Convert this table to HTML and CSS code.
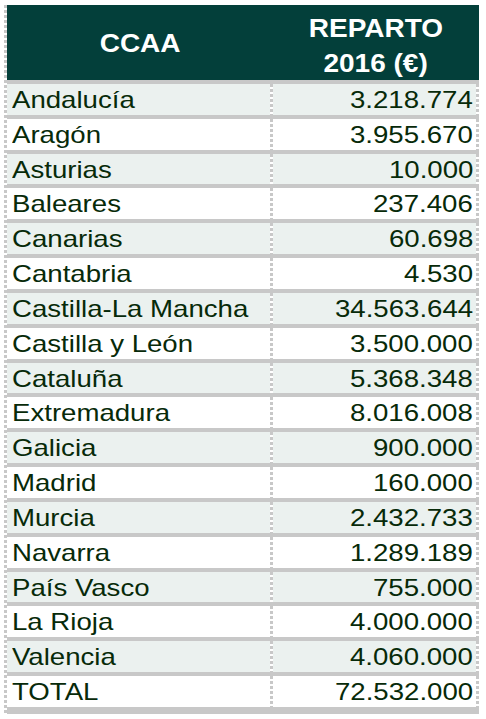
FILE: index.html
```html
<!DOCTYPE html>
<html lang="es">
<head>
<meta charset="utf-8">
<title>Reparto 2016</title>
<link rel="stylesheet" href="styles.css">
</head>
<body>
<div class="sheet">
  <div class="head">
    <div class="hcell hcell-single"><span class="sx">CCAA</span></div>
    <div class="hcell"><span class="sx">REPARTO</span><br><span class="sx">2016 (€)</span></div>
  </div>
  <div class="row alt"><div class="name"><span class="sx">Andalucía</span></div><div class="sep"></div><div class="val"><span class="sx">3.218.774</span></div><div class="edge"></div></div>
  <div class="row"><div class="name"><span class="sx">Aragón</span></div><div class="sep"></div><div class="val"><span class="sx">3.955.670</span></div><div class="edge"></div></div>
  <div class="row alt"><div class="name"><span class="sx">Asturias</span></div><div class="sep"></div><div class="val"><span class="sx">10.000</span></div><div class="edge"></div></div>
  <div class="row"><div class="name"><span class="sx">Baleares</span></div><div class="sep"></div><div class="val"><span class="sx">237.406</span></div><div class="edge"></div></div>
  <div class="row alt"><div class="name"><span class="sx">Canarias</span></div><div class="sep"></div><div class="val"><span class="sx">60.698</span></div><div class="edge"></div></div>
  <div class="row"><div class="name"><span class="sx">Cantabria</span></div><div class="sep"></div><div class="val"><span class="sx">4.530</span></div><div class="edge"></div></div>
  <div class="row alt"><div class="name"><span class="sx">Castilla-La Mancha</span></div><div class="sep"></div><div class="val"><span class="sx">34.563.644</span></div><div class="edge"></div></div>
  <div class="row"><div class="name"><span class="sx">Castilla y León</span></div><div class="sep"></div><div class="val"><span class="sx">3.500.000</span></div><div class="edge"></div></div>
  <div class="row alt"><div class="name"><span class="sx">Cataluña</span></div><div class="sep"></div><div class="val"><span class="sx">5.368.348</span></div><div class="edge"></div></div>
  <div class="row"><div class="name"><span class="sx">Extremadura</span></div><div class="sep"></div><div class="val"><span class="sx">8.016.008</span></div><div class="edge"></div></div>
  <div class="row alt"><div class="name"><span class="sx">Galicia</span></div><div class="sep"></div><div class="val"><span class="sx">900.000</span></div><div class="edge"></div></div>
  <div class="row"><div class="name"><span class="sx">Madrid</span></div><div class="sep"></div><div class="val"><span class="sx">160.000</span></div><div class="edge"></div></div>
  <div class="row alt"><div class="name"><span class="sx">Murcia</span></div><div class="sep"></div><div class="val"><span class="sx">2.432.733</span></div><div class="edge"></div></div>
  <div class="row"><div class="name"><span class="sx">Navarra</span></div><div class="sep"></div><div class="val"><span class="sx">1.289.189</span></div><div class="edge"></div></div>
  <div class="row alt"><div class="name"><span class="sx">País Vasco</span></div><div class="sep"></div><div class="val"><span class="sx">755.000</span></div><div class="edge"></div></div>
  <div class="row"><div class="name"><span class="sx">La Rioja</span></div><div class="sep"></div><div class="val"><span class="sx">4.000.000</span></div><div class="edge"></div></div>
  <div class="row alt"><div class="name"><span class="sx">Valencia</span></div><div class="sep"></div><div class="val"><span class="sx">4.060.000</span></div><div class="edge"></div></div>
  <div class="row last"><div class="name"><span class="sx">TOTAL</span></div><div class="sep"></div><div class="val"><span class="sx">72.532.000</span></div><div class="edge"></div></div>
</div>
</body>
</html>
```
FILE: styles.css
```css
html, body {
  margin: 0;
  padding: 0;
  background: #ffffff;
}

.sheet {
  margin: 5px 0 0 4px;
  padding-left: 3px;
  width: 472px;
  background: repeating-linear-gradient(to bottom, #c8c8c8 0 3px, transparent 3px 5px) left top / 3px 100% no-repeat;
  font-family: "Liberation Sans", Arial, sans-serif;
}

.head {
  display: grid;
  grid-template-columns: 266px 206px;
  height: 75px;
  background: #033f3a;
  color: #ffffff;
  font-weight: bold;
  font-size: 25px;
  line-height: 35px;
  text-align: center;
}

.hcell {
  padding-top: 5.5px;
}

.hcell-single {
  padding-top: 21px;
}

.sx {
  display: inline-block;
  transform: scaleX(1.12);
}

.row {
  display: grid;
  grid-template-columns: 263px 3px 203px 3px;
  height: 30.83px;
  border-top: 4px solid #c8c8c8;
  background: #ffffff;
  color: #072a09;
  font-size: 24px;
  line-height: 26px;
}

.row.alt {
  background: #ebf1ef;
}

.row.last {
  border-bottom: 7px solid #c8c8c8;
}

.name,
.val {
  padding-top: 3px;
  white-space: nowrap;
}

.name {
  padding-left: 5px;
}

.row .sx {
  transform: scaleX(1.15);
}

.name .sx {
  transform-origin: left center;
}

.val {
  padding-right: 3px;
  text-align: right;
}

.val .sx {
  transform-origin: right center;
}

.sep,
.edge {
  background: repeating-linear-gradient(to bottom, #c8c8c8 0 3px, #ffffff 3px 5px);
}
```
